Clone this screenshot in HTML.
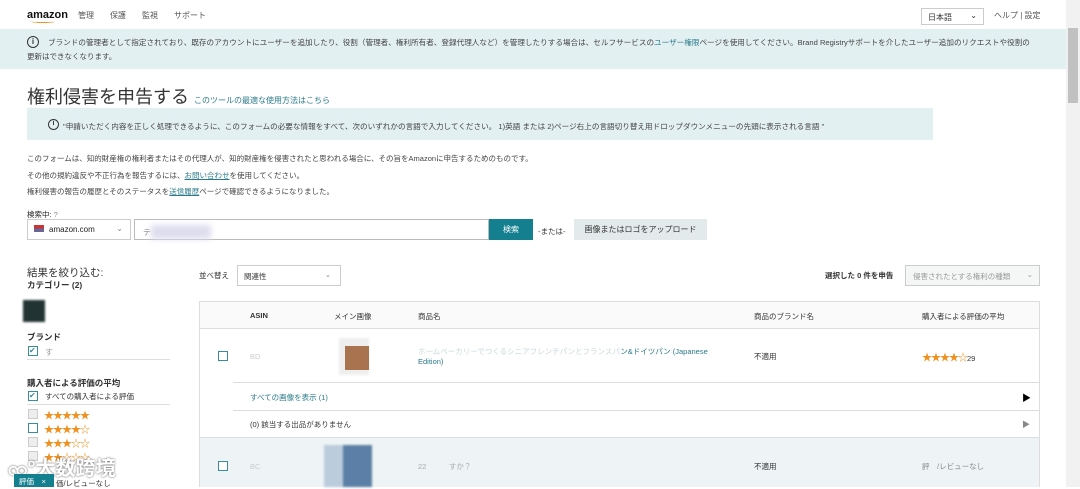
<!DOCTYPE html>
<html><head><meta charset="utf-8"><style>
*{box-sizing:border-box;margin:0;padding:0}
body{width:1080px;height:487px;overflow:hidden;background:#fff;font-family:"Liberation Sans","Noto Sans CJK JP",sans-serif;color:#333;font-size:8px;position:relative}
.a{position:absolute;white-space:nowrap}
.link{color:#2a7b8a}
.cb{position:absolute;width:10px;height:10px;border:1px solid #3a8d9a;background:#fff}
.cbg{position:absolute;width:10px;height:10px;border:1px solid #ccc;background:#eee}
.star{color:#f0901e;font-size:10px;letter-spacing:-1px}
</style></head><body>
<div class="a" style="left:27px;top:9px;font-weight:bold;font-size:11px;color:#111">amazon</div>
<div class="a" style="left:31px;top:20px;width:24px;height:3px;border-bottom:1.5px solid #f0901e;border-radius:0 0 50% 50%"></div>
<div class="a" style="left:78px;top:10px;color:#555">管理　　保護　　監視　　サポート</div>
<div class="a" style="left:921px;top:8px;width:63px;height:17px;border:1px solid #ccc;padding:3px 6px;font-size:8px">日本語<span style="position:absolute;right:6px;top:2px">⌄</span></div>
<div class="a" style="left:994px;top:10px;color:#555">ヘルプ | 設定</div>
<div class="a" style="left:0;top:29px;width:1066px;height:40px;background:#e3f0f2"></div>
<div class="a" style="left:27px;top:36px;width:12px;height:12px;border:1.5px solid #333;border-radius:50%;font-size:8px;text-align:center;line-height:9px;font-weight:bold">i</div>
<div class="a" style="left:48px;top:37px;font-size:7.6px;color:#444">ブランドの管理者として指定されており、既存のアカウントにユーザーを追加したり、役割（管理者、権利所有者、登録代理人など）を管理したりする場合は、セルフサービスの<span class="link">ユーザー権限</span>ページを使用してください。Brand Registryサポートを介したユーザー追加のリクエストや役割の</div>
<div class="a" style="left:27px;top:51px;font-size:7.5px;color:#444">更新はできなくなります。</div>
<div class="a" style="left:27px;top:83px;font-size:18px;color:#333">権利侵害を申告する <span class="link" style="font-size:8px">このツールの最適な使用方法はこちら</span></div>
<div class="a" style="left:27px;top:108px;width:906px;height:32px;background:#e3f0f2"></div>
<div class="a" style="left:48px;top:119px;width:11px;height:11px;border:1.5px solid #333;border-radius:50%;font-size:7px;text-align:center;line-height:8px;font-weight:bold">i</div>
<div class="a" style="left:63px;top:121px;font-size:7.6px;color:#444">"申請いただく内容を正しく処理できるように、このフォームの必要な情報をすべて、次のいずれかの言語で入力してください。 1)英語 または 2)ページ右上の言語切り替え用ドロップダウンメニューの先頭に表示される言語 "</div>
<div class="a" style="left:27px;top:153px;font-size:7.5px;color:#444">このフォームは、知的財産権の権利者またはその代理人が、知的財産権を侵害されたと思われる場合に、その旨をAmazonに申告するためのものです。</div>
<div class="a" style="left:27px;top:170px;font-size:7.5px;color:#444">その他の規約違反や不正行為を報告するには、<span class="link" style="text-decoration:underline">お問い合わせ</span>を使用してください。</div>
<div class="a" style="left:27px;top:186px;font-size:7.5px;color:#444">権利侵害の報告の履歴とそのステータスを<span class="link" style="text-decoration:underline">送信履歴</span>ページで確認できるようになりました。</div>
<div class="a" style="left:27px;top:209px;font-size:7.5px;color:#222">検索中: <span style="color:#888">?</span></div>
<div class="a" style="left:27px;top:219px;width:104px;height:21px;border:1px solid #ccc;padding:5px 6px;font-size:8px;color:#222"><span style="display:inline-block;width:10px;height:7px;background:linear-gradient(#c33 0 50%,#669 50%);margin-right:5px"></span>amazon.com<span style="position:absolute;right:7px;top:4px;color:#888">⌄</span></div>
<div class="a" style="left:134px;top:219px;width:355px;height:21px;border:1px solid #bbb;padding:5px 8px;color:#888">テ<span style="display:inline-block;width:60px;height:14px;background:#dde;filter:blur(3px);vertical-align:-4px"></span></div>
<div class="a" style="left:489px;top:219px;width:44px;height:21px;background:#14808f;color:#fff;text-align:center;line-height:21px;font-size:8px">検索</div>
<div class="a" style="left:538px;top:226px;font-size:7.5px">-または-</div>
<div class="a" style="left:574px;top:219px;width:133px;height:21px;background:#e3eaeb;text-align:center;line-height:21px;font-size:8px">画像またはロゴをアップロード</div>
<div class="a" style="left:27px;top:265px;font-size:10.5px;color:#333">結果を絞り込む:</div>
<div class="a" style="left:27px;top:279px;font-size:8.5px;font-weight:bold">カテゴリー (2)</div>
<div class="a" style="left:23px;top:300px;width:22px;height:22px;background:#233;filter:blur(1px)"></div>
<div class="a" style="left:27px;top:331px;font-size:8.5px;font-weight:bold">ブランド</div>
<div class="cb" style="left:28px;top:346px;color:#3a8d9a;font-size:8px;line-height:8px">✔</div>
<div class="a" style="left:45px;top:347px;color:#999">す</div>
<div class="a" style="left:27px;top:359px;width:143px;border-top:1px solid #ddd"></div>
<div class="a" style="left:27px;top:377px;font-size:8.5px;font-weight:bold">購入者による評価の平均</div>
<div class="cb" style="left:28px;top:391px;color:#3a8d9a;font-size:8px;line-height:8px">✔</div>
<div class="a" style="left:45px;top:391px;font-size:7.5px">すべての購入者による評価</div>
<div class="a" style="left:27px;top:404px;width:143px;border-top:1px solid #ddd"></div>
<div class="cbg" style="left:28px;top:409px"></div><div class="a star" style="left:44px;top:407px">★★★★★</div>
<div class="cb" style="left:28px;top:423px;border-color:#3a8d9a"></div><div class="a star" style="left:44px;top:421px">★★★★☆</div>
<div class="cbg" style="left:28px;top:437px"></div><div class="a star" style="left:44px;top:435px">★★★☆☆</div>
<div class="cbg" style="left:28px;top:451px"></div><div class="a star" style="left:44px;top:449px">★★☆☆☆</div>
<div class="a" style="left:8px;top:452px;font-size:20px;color:#fff;text-shadow:0 0 2px #555;font-weight:bold">ၸ°大数跨境</div>
<div class="a" style="left:14px;top:474px;width:40px;height:13px;background:#14808f;color:#fff;font-size:7.5px;padding:2px 5px">評価　×</div>
<div class="a" style="left:56px;top:478px;font-size:7.5px">価/レビューなし</div>
<div class="a" style="left:199px;top:270px;font-size:7.5px">並べ替え</div>
<div class="a" style="left:237px;top:265px;width:104px;height:21px;border:1px solid #ccc;padding:5px 6px;font-size:7.5px">関連性<span style="position:absolute;right:9px;top:4px;color:#888">⌄</span></div>
<div class="a" style="left:825px;top:270px;font-size:7.5px;font-weight:bold">選択した 0 件を申告</div>
<div class="a" style="left:905px;top:265px;width:135px;height:21px;border:1px solid #ccc;background:#f5f7f7;padding:5px 7px;font-size:7.5px;color:#999">侵害されたとする権利の種類<span style="position:absolute;right:6px;top:4px">⌄</span></div>
<div class="a" style="left:199px;top:301px;width:841px;height:186px;border:1px solid #ddd"></div>
<div class="a" style="left:200px;top:302px;width:839px;height:27px;background:#fafafa;border-bottom:1px solid #ddd"></div>
<div class="a" style="left:250px;top:311px;font-size:7.5px;font-weight:bold">ASIN</div>
<div class="a" style="left:334px;top:311px;font-size:7.5px">メイン画像</div>
<div class="a" style="left:418px;top:311px;font-size:7.5px">商品名</div>
<div class="a" style="left:754px;top:311px;font-size:7.5px">商品のブランド名</div>
<div class="a" style="left:922px;top:311px;font-size:7.5px">購入者による評価の平均</div>
<div class="cb" style="left:218px;top:351px"></div>
<div class="a" style="left:250px;top:352px;color:#ccc;font-size:7.5px">BD</div>
<div class="a" style="left:339px;top:338px;width:30px;height:37px;background:#eee;filter:blur(1px)"></div>
<div class="a" style="left:345px;top:346px;width:24px;height:24px;background:#a8734e"></div>
<div class="a" style="left:418px;top:346px;font-size:7.5px;color:#c8d8db">ホームベーカリーでつくるシニアフレンチパンとフランスパ<span class="link">ン&amp;ドイツパン (Japanese</span></div>
<div class="a" style="left:418px;top:357px;font-size:7.5px"><span class="link">Edition)</span></div>
<div class="a" style="left:754px;top:351px;font-size:7.5px">不適用</div>
<div class="a" style="left:922px;top:349px"><span class="star">★★★★☆</span><span style="font-size:7.5px">29</span></div>
<div class="a" style="left:233px;top:382px;width:806px;border-top:1px solid #ddd"></div>
<div class="a" style="left:250px;top:392px;font-size:7.5px"><span class="link">すべての画像を表示 (1)</span></div>
<div class="a" style="left:1022px;top:391px;font-size:9px;color:#000">▶</div>
<div class="a" style="left:233px;top:410px;width:806px;border-top:1px solid #ddd"></div>
<div class="a" style="left:250px;top:419px;font-size:7.5px">(0) 該当する出品がありません</div>
<div class="a" style="left:1022px;top:419px;font-size:8px;color:#888">▶</div>
<div class="a" style="left:200px;top:437px;width:839px;height:50px;background:#eef4f5;border-top:1px solid #ddd"></div>
<div class="cb" style="left:218px;top:461px"></div>
<div class="a" style="left:250px;top:462px;color:#ccc;font-size:7.5px">BC</div>
<div class="a" style="left:324px;top:445px;width:48px;height:42px;background:linear-gradient(90deg,#bcd 0 40%,#5b7fa6 40%);filter:blur(1px)"></div>
<div class="a" style="left:418px;top:461px;font-size:7.5px;color:#aaa">22　　　すか？</div>
<div class="a" style="left:754px;top:461px;font-size:7.5px">不適用</div>
<div class="a" style="left:922px;top:461px;font-size:7.5px;color:#888">評　/レビューなし</div>
<div class="a" style="left:1066px;top:0;width:14px;height:487px;background:#f1f1f1"></div>
<div class="a" style="left:1068px;top:28px;width:10px;height:75px;background:#c1c1c1"></div>
</body></html>
